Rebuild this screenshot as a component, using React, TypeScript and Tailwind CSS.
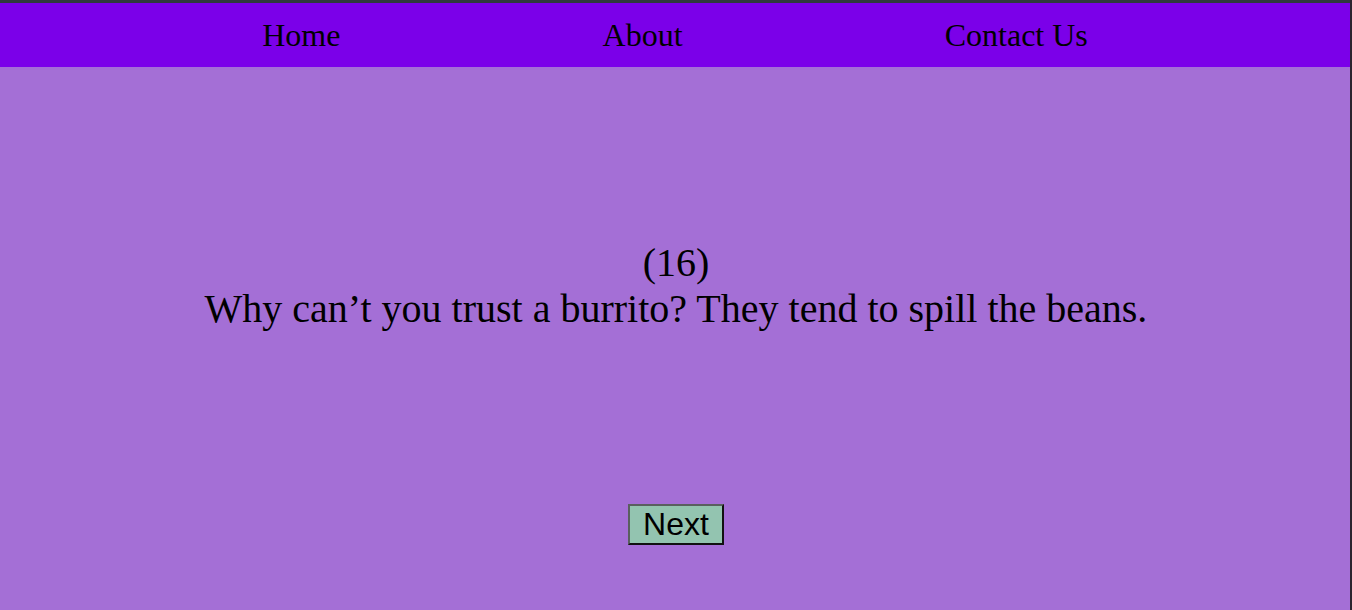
import React from 'react'

const links = ['Home', 'About', 'Contact Us']

const App = () => {
  return (
    <div className="relative min-h-[610px] bg-[#a46fd6] border-t-[3px] border-t-[#30393d] font-['Liberation_Serif',serif] text-black after:content-[''] after:absolute after:-top-[3px] after:bottom-0 after:right-0 after:w-[2px] after:bg-[#2b2630]">
      <nav className="h-16 pr-[2px] bg-[#7b00e9] flex justify-evenly items-center text-[32px]">
        {links.map((link) => (
          <a key={link} href="#" className="leading-none">
            {link}
          </a>
        ))}
      </nav>
      <main className="flex flex-col items-center text-center">
        <div className="mt-[173px] text-[40px] leading-[46px]">
          <p>(16)</p>
          <p>Why can’t you trust a burrito? They tend to spill the beans.</p>
        </div>
        <button className="mt-[172px] h-[41px] px-[13px] pb-[2px] bg-[#93c4b0] border-2 border-t-[#5a5f5f] border-l-[#5a5f5f] border-b-[#111] border-r-[#111] font-['Liberation_Sans',sans-serif] text-[32px] leading-none">
          Next
        </button>
      </main>
    </div>
  )
}

export default App
